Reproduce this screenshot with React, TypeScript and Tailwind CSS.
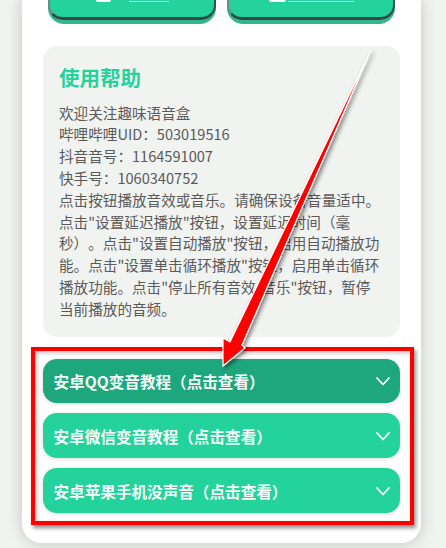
const rows = [
  { t: "安卓QQ变音教程（点击查看）", dark: true },
  { t: "安卓微信变音教程（点击查看）", dark: false },
  { t: "安卓苹果手机没声音（点击查看）", dark: false },
];

function Chevron() {
  return (
    <svg width="14" height="9" viewBox="0 0 14 9" fill="none" className="block">
      <path d="M1 1 L7 7.5 L13 1" stroke="#f4fbf8" strokeWidth="1.8" strokeLinecap="round" strokeLinejoin="round" />
    </svg>
  );
}

function TopButton({ children }: { children: React.ReactNode }) {
  return (
    <div className="w-[168px] h-[24px] rounded-b-[16px] bg-[#35b58c] overflow-hidden">
      <div className="h-[20px] rounded-b-[15px] bg-[#23d39b] border-b-[3px] border-b-[#2f4a45] border-l-[2px] border-r-[2px] border-l-[#6f8a82] border-r-[#34504a] flex justify-center overflow-hidden">
        {children}
      </div>
    </div>
  );
}

export default function App() {
  return (
    <div className="relative w-[446px] h-[548px] overflow-hidden bg-[#f1f3f1] font-['Noto_Sans_CJK_SC',sans-serif] [text-spacing-trim:space-all]">
      <div className="ml-[22px] w-[399px] h-[543px] bg-white rounded-b-[20px] shadow-[0_0_16px_rgba(0,0,0,0.2)] px-[21px] flex flex-col">
        <div className="flex gap-[11px] pl-[5px]">
          <TopButton>
            <div className="flex items-end gap-[18px] h-[2px]">
              <div className="w-[15px] h-[2px] rounded-b-[2px] bg-white" />
              <div className="w-[40px] h-[1px] bg-white/70" />
            </div>
          </TopButton>
          <TopButton>
            <div className="flex items-end gap-[2px] h-[2px]">
              <div className="w-[17px] h-[2px] rounded-b-[2px] bg-white" />
              <div className="w-[66px] h-[1px] bg-white/70" />
            </div>
          </TopButton>
        </div>
        <div className="mt-[22px] h-[291px] bg-[#f1f3f1] rounded-[14px] px-[16px] pt-[16px]">
          <h2 className="text-[20.5px] leading-[30px] font-bold text-[#23d39b]">使用帮助</h2>
          <div className="mt-[9.6px] text-[14.6px] leading-[21.8px] text-[#5a5a5a]">
            <p>欢迎关注趣味语音盒</p>
            <p>哔哩哔哩UID：503019516</p>
            <p>抖音音号：1164591007</p>
            <p>快手号：1060340752</p>
            <p>点击按钮播放音效或音乐。请确保设备音量适中。点击"设置延迟播放"按钮，设置延迟时间（毫秒）。点击"设置自动播放"按钮，启用自动播放功能。点击"设置单击循环播放"按钮，启用单击循环播放功能。点击"停止所有音效/音乐"按钮，暂停当前播放的音频。</p>
          </div>
        </div>
        <div className="mt-[21.5px] flex flex-col gap-[10.7px]">
          {rows.map((r) => (
            <div
              key={r.t}
              className={`h-[44.3px] rounded-[14px] pl-[10.5px] pr-[10px] pt-[2px] flex items-center justify-between shadow-[0_1px_4px_rgba(0,0,0,0.15)] ${r.dark ? "bg-[#1ea67d]" : "bg-[#23d39b]"}`}
            >
              <span className="text-[15.6px] font-bold text-[#f4fbf8]">{r.t}</span>
              <Chevron />
            </div>
          ))}
        </div>
      </div>

      <div className="absolute left-[31px] top-[347px] w-[383px] h-[178px] border-[4px] border-[#ff0000] shadow-[2px_3px_4px_rgba(0,0,0,0.45),inset_2px_2px_4px_rgba(0,0,0,0.25)]" />

      <svg className="absolute left-0 top-0" width="446" height="548" viewBox="0 0 446 548" fill="none">
        <defs>
          <filter id="s" x="-20%" y="-20%" width="150%" height="150%">
            <feDropShadow dx="2" dy="2" stdDeviation="2" floodColor="#000" floodOpacity="0.5" />
          </filter>
        </defs>
        <polygon
          points="371,50 242,345 245,348 223,366 223,338 230,342"
          fill="#ff0000"
          stroke="#ffffff"
          strokeWidth="1.2"
          filter="url(#s)"
        />
      </svg>
    </div>
  );
}
